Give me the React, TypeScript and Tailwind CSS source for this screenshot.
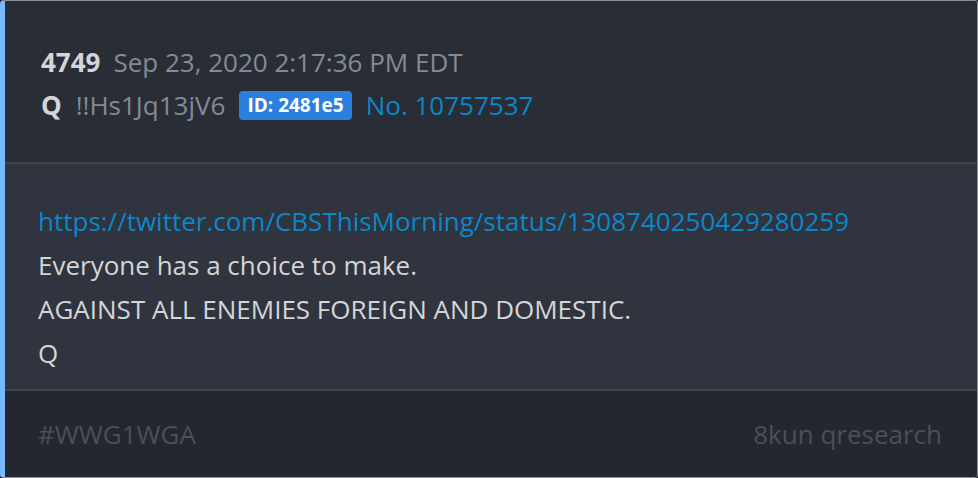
export default function App() {
  return (
    <div className="w-[978px] h-[478px] bg-[#1b1d22] font-['Open_Sans',sans-serif]">
      <div className="h-full flex flex-col rounded-[4px] border border-[#8a8e96] border-l-[5px] border-l-[#79b8ff] overflow-hidden">
        {/* header */}
        <div className="h-[161px] bg-[#292d36] pl-[36px] pt-[42px] flex flex-col gap-[5px] text-[26px] leading-[38px]">
          <div className="flex items-baseline gap-[13px]">
            <span className="font-bold text-[#d4d5d8]">4749</span>
            <span className="text-[#858a95]">Sep 23, 2020 2:17:36 PM EDT</span>
          </div>
          <div className="flex items-center gap-[14px]">
            <span className="font-bold text-[#d4d5d8]">Q</span>
            <span className="text-[#858a95]">!!Hs1Jq13jV6</span>
            <span className="rounded-[4px] bg-[#2b80df] px-[8px] text-[19px] leading-[29px] font-bold text-white">ID: 2481e5</span>
            <span className="text-[#0b87c9]">No. 10757537</span>
          </div>
        </div>
        <div className="h-[2px] bg-[#3f434c]" />
        {/* body */}
        <div className="h-[225px] bg-[#2f343e] pl-[33px] pt-[35px] text-[26px] leading-[44px] text-[#d4d5d8]">
          <div className="text-[#0b87c9]">https://twitter.com/CBSThisMorning/status/1308740250429280259</div>
          <div>Everyone has a choice to make.</div>
          <div>AGAINST ALL ENEMIES FOREIGN AND DOMESTIC.</div>
          <div>Q</div>
        </div>
        <div className="h-[2px] bg-[#3f434c]" />
        {/* footer */}
        <div className="flex-1 bg-[#242730] pl-[33px] pr-[35px] flex items-center justify-between text-[26px] text-[#4a4f59]">
          <span>#WWG1WGA</span>
          <span>8kun qresearch</span>
        </div>
      </div>
    </div>
  );
}
